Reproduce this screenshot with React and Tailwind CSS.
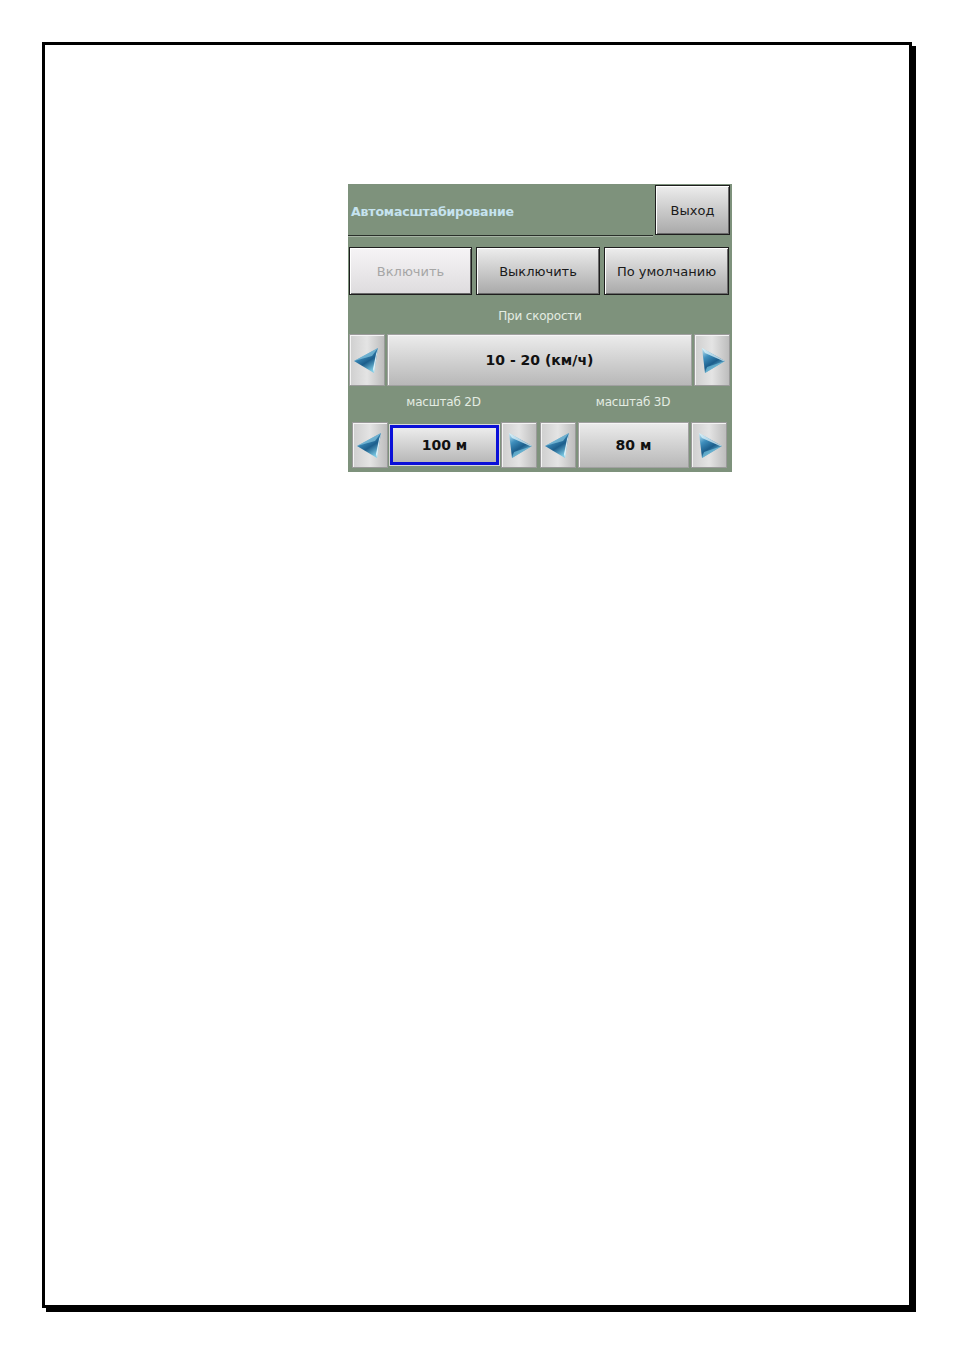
import React from "react";

const font = { fontFamily: '"DejaVu Sans", Tahoma, sans-serif' };

function Arrow({ dir }) {
  const id = React.useId().replace(/:/g, "");
  const left = dir === "left";
  return (
    <svg width="30" height="30" viewBox="0 0 30 30">
      <defs>
        <linearGradient id={"g" + id} x1="0" y1="0" x2="0.6" y2="1">
          <stop offset="0" stopColor="#cfeef8" />
          <stop offset="0.35" stopColor="#3f8fbd" />
          <stop offset="0.65" stopColor="#1c5e8c" />
          <stop offset="1" stopColor="#7cc9e3" />
        </linearGradient>
      </defs>
      {left ? (
        <g>
          <polygon points="2,16 26,3 22,28" fill={"url(#g" + id + ")"} />
          <polygon points="2,16 26,3 20,11" fill="#9cd8ec" opacity="0.55" />
          <polygon points="22,28 26,3 24,9 21,24" fill="#f2fbfe" opacity="0.85" />
        </g>
      ) : (
        <g>
          <polygon points="28,16 5,3 8,28" fill={"url(#g" + id + ")"} />
          <polygon points="5,3 8,8 26,16 28,16" fill="#dff3fa" opacity="0.75" />
          <polygon points="8,28 28,16 10,22" fill="#7fcbe4" opacity="0.6" />
        </g>
      )}
    </svg>
  );
}

function Btn({ children, disabled, className = "" }) {
  return (
    <div
      className={
        "flex items-center justify-center border border-[#1e1e1e] shadow-[inset_1px_1px_0_#ffffff,inset_-1px_-1px_0_#6a6a6a] text-[13px] pt-[2px] " +
        (disabled
          ? "bg-gradient-to-b from-[#f6f4f6] to-[#dedcde] text-[#a6a6a6] "
          : "bg-gradient-to-b from-[#ededed] to-[#a9a9a9] text-[#1a1a1a] ") +
        className
      }
    >
      {children}
    </div>
  );
}

function ArrowBtn({ dir, className = "" }) {
  return (
    <div
      className={
        "flex items-center justify-center border border-[#9a9a9a] bg-gradient-to-r from-[#cfcfcf] via-[#e4e4e4] to-[#bdbdbd] shadow-[inset_1px_1px_0_#f4f4f4] " +
        className
      }
    >
      <Arrow dir={dir} />
    </div>
  );
}

function ValueBox({ children, selected, className = "" }) {
  return (
    <div
      className={
        "flex items-center justify-center font-bold text-[14px] text-[#111] bg-gradient-to-b from-[#ececec] to-[#b8b8b8] " +
        (selected
          ? "border-[3px] border-[#0a10d8] shadow-[0_0_0_1px_#d8d8d8] "
          : "border border-[#a0a0a0] shadow-[inset_1px_1px_0_#f6f6f6] ") +
        className
      }
    >
      {children}
    </div>
  );
}

export default function App() {
  return (
    <div className="w-[954px] h-[1350px] bg-white pt-[42px] pl-[42px]" style={font}>
      <div className="w-[870px] h-[1266px] border-[3px] border-black shadow-[4px_4px_0_#000] pl-[303px] pt-[139px]">
        <div className="w-[384px] h-[288px] bg-[#7e927c] flex flex-col">
          {/* header */}
          <div className="flex h-[52px] pt-[1px]">
            <div className="w-[305px] h-[51px] flex items-center border-b border-[#2a302a] shadow-[0_1px_0_#a6b4a4]">
              <span className="pl-[3px] pt-[4px] text-[12.5px] font-bold text-[#c6e3ef] tracking-[-0.15px]">
                Автомасштабирование
              </span>
            </div>
            <Btn className="ml-[2px] w-[75px] h-[50px]">Выход</Btn>
          </div>
          {/* buttons row */}
          <div className="flex gap-[4px] pl-[1px] mt-[11px] h-[48px]">
            <Btn disabled className="w-[123px] h-[48px]">Включить</Btn>
            <Btn className="w-[124px] h-[48px]">Выключить</Btn>
            <Btn className="w-[125px] h-[48px]">По умолчанию</Btn>
          </div>
          {/* label */}
          <div className="h-[39px] flex items-center justify-center text-[12px] text-[#e4ece2] pt-[3px] tracking-[-0.2px]">
            При скорости
          </div>
          {/* speed row */}
          <div className="flex h-[52px] pl-[1px] gap-[2px]">
            <ArrowBtn dir="left" className="w-[36px] h-[52px]" />
            <ValueBox className="w-[305px] h-[52px]">10 - 20 (км/ч)</ValueBox>
            <ArrowBtn dir="right" className="w-[36px] h-[52px]" />
          </div>
          {/* scale labels */}
          <div className="h-[36px] flex items-center text-[12px] text-[#e4ece2] pb-[5px] tracking-[-0.2px]">
            <div className="w-[190px] text-center pl-[1px]">масштаб 2D</div>
            <div className="w-[190px] text-center">масштаб 3D</div>
          </div>
          {/* scale row */}
          <div className="flex h-[46px] pl-[4px]">
            <ArrowBtn dir="left" className="w-[36px] h-[46px]" />
            <ValueBox selected className="ml-[2px] w-[109px] h-[40px] mt-[3px]">100 м</ValueBox>
            <ArrowBtn dir="right" className="ml-[2px] w-[36px] h-[46px]" />
            <ArrowBtn dir="left" className="ml-[3px] w-[36px] h-[46px]" />
            <ValueBox className="ml-[2px] w-[111px] h-[46px]">80 м</ValueBox>
            <ArrowBtn dir="right" className="ml-[2px] w-[36px] h-[46px]" />
          </div>
        </div>
      </div>
    </div>
  );
}
